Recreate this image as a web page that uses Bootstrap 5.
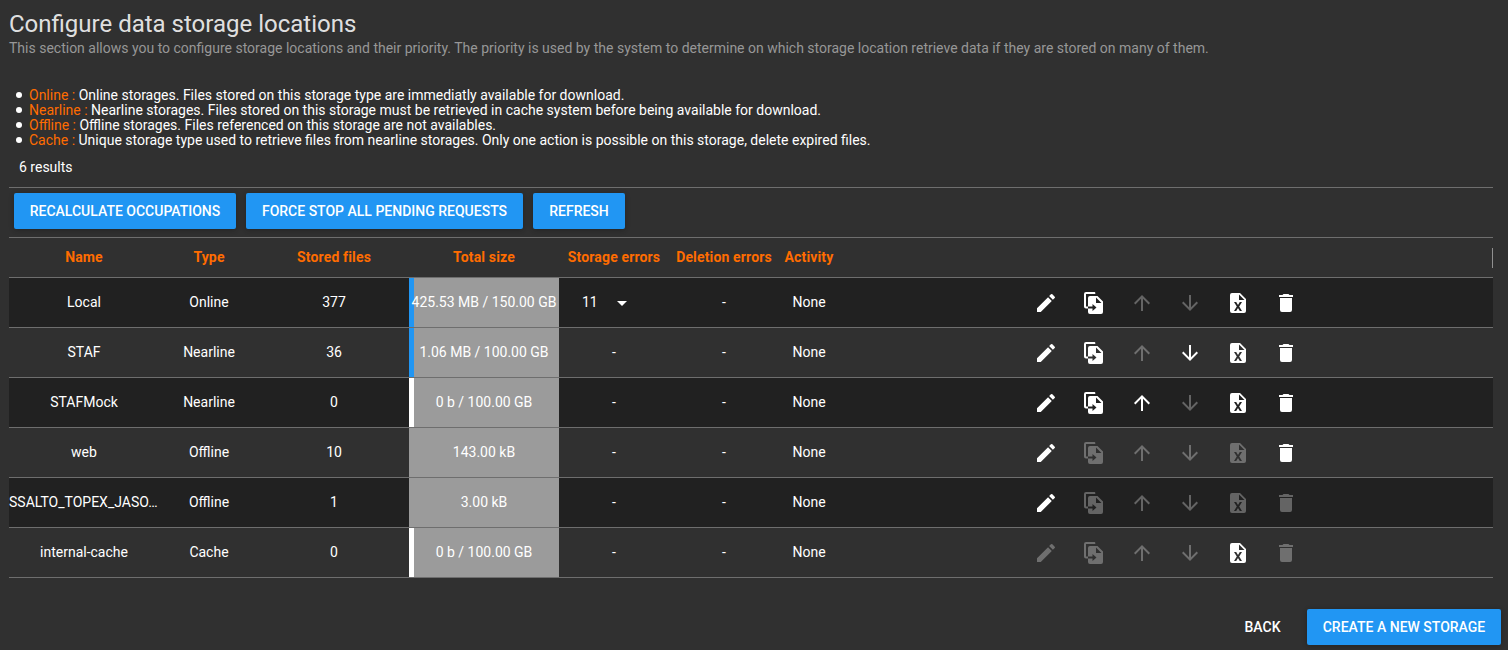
<!DOCTYPE html>
<html lang="en">
<head>
<meta charset="utf-8">
<title>Data storage locations</title>
<link href="https://cdn.jsdelivr.net/npm/bootstrap@5.3.0/dist/css/bootstrap.min.css" rel="stylesheet">
<style>
body{background:#303030;color:#fff;font:14px/15px Roboto,sans-serif;width:1508px;height:650px;overflow:hidden}
.page{padding-left:9px}
.page-title{font-size:24px;line-height:36px;font-weight:400;color:rgba(255,255,255,.87);padding-top:6px}
.page-sub{color:#979797;line-height:16px;margin-top:-2px}
.accent{color:#ff6c00}
.types{margin:32px 0 0;padding-left:20px;list-style:none}
.types li{position:relative}
.types li::before{content:"";position:absolute;left:-13px;top:4px;width:6px;height:6px;border-radius:50%;background:#fff}
.results{margin:10px 0 0 10px;line-height:16px;height:29px;padding-top:1px}
.table-zone{width:1484px}
.toolbar{height:51px;border-top:1px solid #6e6e6e;border-bottom:1px solid #6e6e6e;padding:5px}
.btn-flat{height:36px;border-radius:2px;border:0;padding:0;text-align:center;font-size:14px;font-weight:500;line-height:36px;color:#fff;text-transform:uppercase;white-space:nowrap}
.btn-main{background:#2196f3;box-shadow:0 1px 6px rgba(0,0,0,.12),0 1px 4px rgba(0,0,0,.12)}
.btn-flat:hover{background:#2196f3;color:#fff}
.w-recalc{width:222px}.w-stop{width:277px}.w-refresh{width:92px}.w-back{width:69px}.w-create{width:194px}
.gap-10{gap:10px}
.footer-bar{margin:31px 7px 0 0}
.grid-row{display:grid;grid-template-columns:150px 100px 150px 150px 110px 110px 60px 1fr;height:50px;border-bottom:1px solid #6e6e6e;text-align:center;align-items:center;white-space:nowrap}
.grid-row>div{line-height:20px;padding-bottom:1px}
.grid-row.odd-row{background:#212121}
.head-row{height:40px;color:#ff6c00;font-weight:700;letter-spacing:.15px}
.head-row>.head-end{border-right:1px solid #909090;height:20px;justify-self:end;margin-top:1px}
.grid-row>.size-cell{height:49px;background:#9b9b9b;line-height:48px;overflow:hidden}
.size-cell.used{box-shadow:inset 5px 0 #2196f3}
.size-cell.empty{box-shadow:inset 5px 0 #fff}
.grid-row>.actions{padding:1px 0 0}
.actions svg{width:24px;height:24px;fill:#fff;display:block}
.actions .off{opacity:.3}
.error-cell{padding-left:23px}
.caret-svg{width:24px;height:24px;fill:#fff;margin:2px 0 0 12px}
</style>
</head>
<body>
<svg class="d-none">
<symbol id="edit" viewBox="0 0 24 24"><path d="M3 17.25V21h3.75L17.81 9.94l-3.75-3.75L3 17.25zM20.71 7.04a1 1 0 0 0 0-1.41l-2.34-2.34a1 1 0 0 0-1.41 0l-1.83 1.83 3.75 3.75 1.83-1.83z"/></symbol>
<symbol id="copy" viewBox="0 0 24 24"><path fill-rule="evenodd" d="M12 1H4a2 2 0 0 0-2 2v12.500a2 2 0 0 0 2 2h2v-2H4V3h9.300V2A1 1 0 0 0 12 1zM8 5h7.500L21 10.500V21a2 2 0 0 1-2 2H8a2 2 0 0 1-2-2v-3.500h4.500V20l4-3.500-4-3.500v2.500H6V7a2 2 0 0 1 2-2zM14 6.500V12h5.500z"/></symbol>
<symbol id="up" viewBox="0 0 24 24"><path d="M4 12l1.41 1.41L11 7.83V20h2V7.830l5.580 5.590L20 12l-8-8-8 8z"/></symbol>
<symbol id="down" viewBox="0 0 24 24"><path d="M20 12l-1.410-1.410L13 16.170V4h-2v12.170l-5.580-5.590L4 12l8 8 8-8z"/></symbol>
<symbol id="excel" viewBox="0 0 24 24"><path fill-rule="evenodd" d="M14 2H6a2 2 0 0 0-2 2v16a2 2 0 0 0 2 2h12a2 2 0 0 0 2-2V8zM13 3.500L18.500 9H13zM13.200 15.500L16 20h-2.200L12 17.100 10.200 20H8l2.800-4.500L8 11h2.200l1.800 2.900 1.800-2.900H16z"/></symbol>
<symbol id="bin" viewBox="0 0 24 24"><path d="M6 19a2 2 0 0 0 2 2h8a2 2 0 0 0 2-2V7H6zM19 4h-3.500l-1-1h-5l-1 1H5v2h14z"/></symbol>
</svg>
<main class="page">
<h1 class="page-title mb-0">Configure data storage locations</h1>
<p class="page-sub mb-0">This section allows you to configure storage locations and their priority. The priority is used by the system to determine on which storage location retrieve data if they are stored on many of them.</p>
<ul class="types">
<li><span class="accent">Online : </span>Online storages. Files stored on this storage type are immediatly available for download.</li>
<li><span class="accent">Nearline : </span>Nearline storages. Files stored on this storage must be retrieved in cache system before being available for download.</li>
<li><span class="accent">Offline : </span>Offline storages. Files referenced on this storage are not availables.</li>
<li><span class="accent">Cache : </span>Unique storage type used to retrieve files from nearline storages. Only one action is possible on this storage, delete expired files.</li>
</ul>
<div class="results">6 results</div>
<section class="table-zone">
<div class="toolbar d-flex gap-10">
<button class="btn btn-flat btn-main w-recalc">Recalculate occupations</button>
<button class="btn btn-flat btn-main w-stop">Force stop all pending requests</button>
<button class="btn btn-flat btn-main w-refresh">Refresh</button>
</div>
<div class="grid-row head-row"><div>Name</div><div>Type</div><div>Stored files</div><div>Total size</div><div>Storage errors</div><div>Deletion errors</div><div>Activity</div><div class="head-end"></div></div>
<div id="rows"></div>
</section>
<footer class="footer-bar d-flex justify-content-end gap-10">
<button class="btn btn-flat w-back">Back</button>
<button class="btn btn-flat btn-main w-create">Create a new storage</button>
</footer>
</main>
<script src="https://cdn.jsdelivr.net/npm/bootstrap@5.3.0/dist/js/bootstrap.bundle.min.js"></script>
<script>
const icons = ['edit', 'copy', 'up', 'down', 'excel', 'bin'];
// name, type, files, size, occupation style, errors, enabled actions
const storages = [
  ['Local', 'Online', '377', '425.53 MB / 150.00 GB', 'used', '11', '110011'],
  ['STAF', 'Nearline', '36', '1.06 MB / 100.00 GB', 'used', '-', '110111'],
  ['STAFMock', 'Nearline', '0', '0 b / 100.00 GB', 'empty', '-', '111011'],
  ['web', 'Offline', '10', '143.00 kB', '', '-', '100001'],
  ['SSALTO_TOPEX_JASO…', 'Offline', '1', '3.00 kB', '', '-', '100000'],
  ['internal-cache', 'Cache', '0', '0 b / 100.00 GB', 'empty', '-', '000010']
];
document.getElementById('rows').innerHTML = storages.map((s, i) => `
<div class="grid-row ${i % 2 ? '' : 'odd-row'}">
<div class="${s[0].length > 16 ? 'text-start' : ''}">${s[0]}</div><div>${s[1]}</div><div>${s[2]}</div><div class="size-cell ${s[4]}">${s[3]}</div>
${s[5] === '-' ? '<div>-</div>' : `<div class="error-cell d-flex align-items-center"><span>${s[5]}</span><svg class="caret-svg" viewBox="0 0 24 24"><path d="M7 10l5 5 5-5z"/></svg></div>`}
<div>-</div><div>None</div>
<div class="actions d-flex justify-content-center gap-4">${icons.map((n, k) => `<svg class="${s[6][k] === '1' ? '' : 'off'}"><use href="#${n}"/></svg>`).join('')}</div>
</div>`).join('');
</script>
</body>
</html>
